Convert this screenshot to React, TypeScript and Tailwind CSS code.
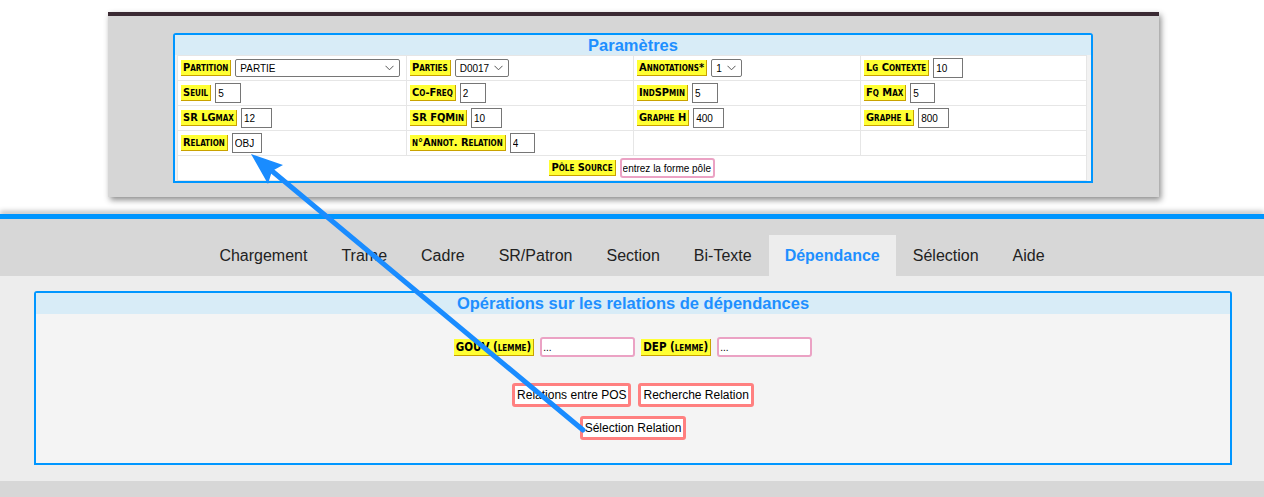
import type { ReactNode } from 'react';

const labelCls =
  "inline-block shrink-0 whitespace-nowrap bg-[#ffff33] border-r border-b border-[#c9a200] px-[2px] font-['DejaVu_Sans_Condensed','DejaVu_Sans',Verdana,sans-serif] text-[11px] leading-[15px] font-bold text-black [font-variant:small-caps]";

const bigLabelCls =
  "inline-block shrink-0 whitespace-nowrap bg-[#ffff33] border-r border-b border-[#c9a200] px-[2px] font-['DejaVu_Sans_Condensed','DejaVu_Sans',Verdana,sans-serif] text-[11.5px] leading-[16px] font-bold text-black [font-variant:small-caps]";

function Label({ children, big = false }: { children: ReactNode; big?: boolean }) {
  return <span className={big ? bigLabelCls : labelCls}>{children}</span>;
}

function Field({ value, className }: { value: string; className: string }) {
  return (
    <input
      readOnly
      value={value}
      className={`h-[20px] shrink-0 border border-[#767676] bg-white px-[2px] text-[10px] text-black outline-none ${className}`}
    />
  );
}

function PinkField({ value, className }: { value: string; className: string }) {
  return (
    <input
      readOnly
      value={value}
      className={`h-[20px] shrink-0 rounded-[3px] border-2 border-[#eba2c4] bg-white px-px text-[10px] text-black outline-none ${className}`}
    />
  );
}

function SelectBox({ value, className }: { value: string; className: string }) {
  return (
    <div
      className={`flex h-[18px] shrink-0 items-center justify-between rounded-[2px] border border-[#767676] bg-white pl-[4px] pr-[5px] text-[10px] text-black ${className}`}
    >
      <span>{value}</span>
      <svg width="9" height="6" viewBox="0 0 9 6" fill="none" stroke="#555" strokeWidth="1">
        <path d="M0.5 0.8 L4.5 4.8 L8.5 0.8" />
      </svg>
    </div>
  );
}

function Cell({ children }: { children?: ReactNode }) {
  return <div className="flex h-[24px] items-center gap-[4px] bg-white pl-[3px]">{children}</div>;
}

function Button({ children }: { children: ReactNode }) {
  return (
    <button className="h-[24px] rounded-[3px] border-[3px] border-[#ff8080] bg-white px-[2px] text-[12px] leading-none text-black">
      {children}
    </button>
  );
}

const tabs = ['Chargement', 'Trame', 'Cadre', 'SR/Patron', 'Section', 'Bi-Texte', 'Dépendance', 'Sélection', 'Aide'];

export default function App() {
  return (
    <div className="relative flex h-[497px] w-[1264px] flex-col overflow-hidden bg-white font-['Liberation_Sans',Arial,sans-serif]">
      {/* inset screenshot of the parameters popup */}
      <div className="h-[214px] shrink-0 pl-[108px] pt-[12px]">
        <div className="h-[185px] w-[1051px] border-t-4 border-[#3a2a33] bg-[#d6d6d6] pl-[65px] pt-[17px] shadow-[2px_3px_6px_rgba(0,0,0,0.45)]">
          <div className="w-[920px] rounded-t-[3px] border-2 border-[#0096ff]">
            <div className="h-[20px] bg-[#d8ecf7] text-center text-[16.5px] font-bold leading-[21px] text-[#1e8fff]">
              Paramètres
            </div>
            <div className="flex bg-[#f2f2f2] pl-[2px]">
              <div className="grid w-[910px] grid-cols-[228px_226px_226px_225px] gap-px bg-[#e6e6e6] p-px">
                <Cell>
                  <Label>Partition</Label>
                  <SelectBox value="PARTIE" className="w-[165px]" />
                </Cell>
                <Cell>
                  <Label>Parties</Label>
                  <SelectBox value="D0017" className="w-[54px]" />
                </Cell>
                <Cell>
                  <Label>Annotations*</Label>
                  <SelectBox value="1" className="w-[31px]" />
                </Cell>
                <Cell>
                  <Label>Lg Contexte</Label>
                  <Field value="10" className="w-[30px]" />
                </Cell>

                <Cell>
                  <Label>Seuil</Label>
                  <Field value="5" className="w-[26px]" />
                </Cell>
                <Cell>
                  <Label>Co-Freq</Label>
                  <Field value="2" className="w-[26px]" />
                </Cell>
                <Cell>
                  <Label>IndSPmin</Label>
                  <Field value="5" className="w-[26px]" />
                </Cell>
                <Cell>
                  <Label>Fq Max</Label>
                  <Field value="5" className="w-[25px]" />
                </Cell>

                <Cell>
                  <Label>SR LGmax</Label>
                  <Field value="12" className="w-[31px]" />
                </Cell>
                <Cell>
                  <Label>SR FQMin</Label>
                  <Field value="10" className="w-[31px]" />
                </Cell>
                <Cell>
                  <Label>Graphe H</Label>
                  <Field value="400" className="w-[31px]" />
                </Cell>
                <Cell>
                  <Label>Graphe L</Label>
                  <Field value="800" className="w-[31px]" />
                </Cell>

                <Cell>
                  <Label>Relation</Label>
                  <Field value="OBJ" className="w-[30px]" />
                </Cell>
                <Cell>
                  <Label>n°Annot. Relation</Label>
                  <Field value="4" className="w-[25px]" />
                </Cell>
                <Cell />
                <Cell />

                <div className="col-span-4 flex h-[24px] items-center justify-center gap-[4px] bg-white">
                  <Label>Pôle Source</Label>
                  <PinkField value="entrez la forme pôle" className="w-[95px]" />
                </div>
              </div>
            </div>
          </div>
        </div>
      </div>

      {/* page under the popup */}
      <div className="h-[5px] shrink-0 bg-[#0096ff] shadow-[0_-3px_5px_rgba(0,0,0,0.25)]" />
      <div className="flex h-[57px] shrink-0 items-end justify-center bg-[#d7d7d7]">
        {tabs.map((t) =>
          t === 'Dépendance' ? (
            <div key={t} className="flex h-[41px] items-center bg-[#ededed] px-[16px] text-[16px] font-bold text-[#1e8fff]">
              {t}
            </div>
          ) : (
            <div key={t} className="flex h-[41px] items-center px-[17px] text-[16px] text-[#222]">
              {t}
            </div>
          ),
        )}
      </div>

      <div className="h-[205px] shrink-0 bg-[#ededed] pl-[34px] pt-[15px]">
        <div className="w-[1198px] rounded-t-[3px] border-2 border-[#0096ff]">
          <div className="h-[21px] bg-[#d8ecf7] text-center text-[16.5px] font-bold leading-[21px] text-[#1e8fff]">
            Opérations sur les relations de dépendances
          </div>
          <div className="flex h-[149px] flex-col items-center bg-[#f4f4f4] pt-[23px]">
            <div className="flex items-center gap-[6px]">
              <Label big>GOUV (lemme)</Label>
              <PinkField value="..." className="w-[95px]" />
              <Label big>DEP (lemme)</Label>
              <PinkField value="..." className="w-[95px]" />
            </div>
            <div className="mt-[26px] flex gap-[7px]">
              <Button>Relations entre POS</Button>
              <Button>Recherche Relation</Button>
            </div>
            <div className="mt-[8px]">
              <Button>Sélection Relation</Button>
            </div>
          </div>
        </div>
      </div>
      <div className="flex-1 bg-[#d7d7d7]" />

      {/* annotation arrow */}
      <svg className="pointer-events-none absolute left-0 top-0" width="1264" height="497" viewBox="0 0 1264 497">
        <line x1="583" y1="430" x2="272" y2="171" stroke="#1a8cff" strokeWidth="5" strokeLinecap="round" />
        <polygon points="251,154 283,165 272,171 268,184" fill="#1a8cff" />
      </svg>
    </div>
  );
}
